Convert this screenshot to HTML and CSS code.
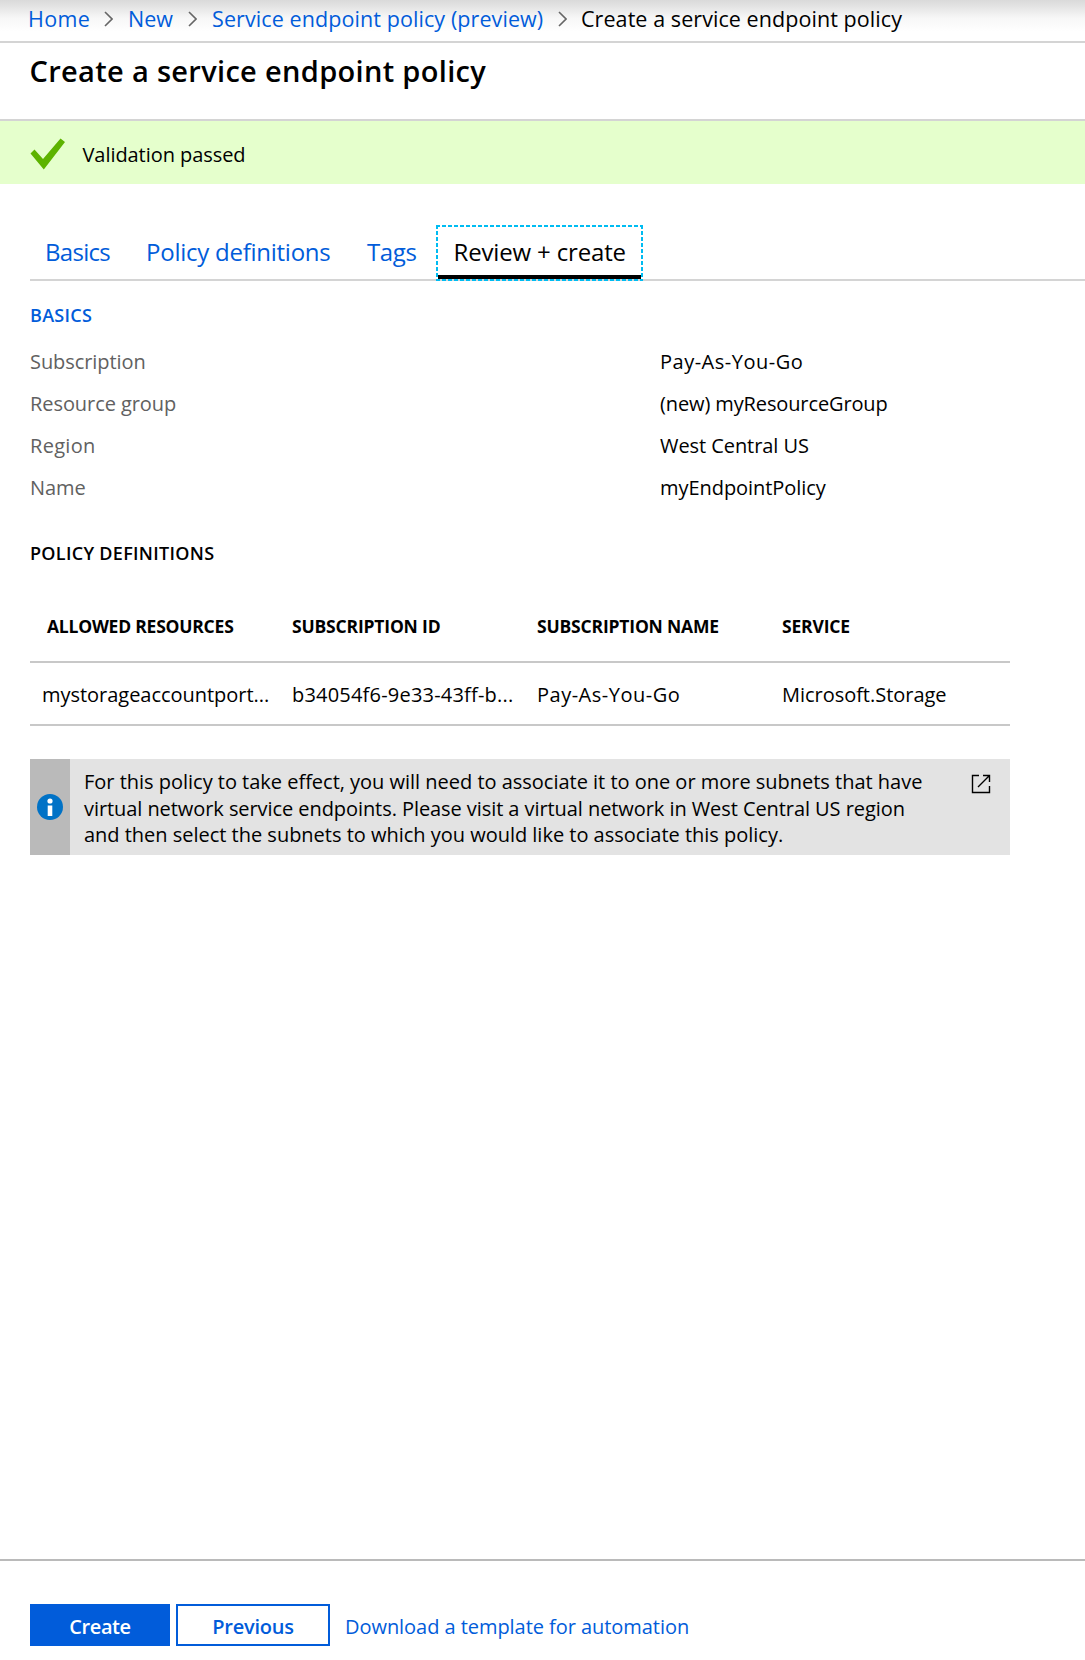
FILE: index.html
```html
<!DOCTYPE html>
<html lang="en">
<head>
<meta charset="utf-8">
<title>Create a service endpoint policy</title>
<link rel="stylesheet" href="styles.css">
</head>
<body>
<div class="page">
  <nav class="breadcrumb">
    <a class="crumb crumb-home" href="#">Home</a>
    <svg class="chevron" viewBox="0 0 9 16"><path d="M1 1l7 7-7 7"/></svg>
    <a class="crumb crumb-new" href="#">New</a>
    <svg class="chevron" viewBox="0 0 9 16"><path d="M1 1l7 7-7 7"/></svg>
    <a class="crumb crumb-service" href="#">Service endpoint policy (preview)</a>
    <svg class="chevron" viewBox="0 0 9 16"><path d="M1 1l7 7-7 7"/></svg>
    <span class="crumb crumb-current">Create a service endpoint policy</span>
  </nav>

  <h1 class="title">Create a service endpoint policy</h1>

  <div class="validation">
    <svg class="check" viewBox="0 0 36 32"><path d="M0.5 15.5L4.5 11.5L13 21L30.500 0.5L35 4L13.800 31.500Z"/></svg>
    <span>Validation passed</span>
  </div>

  <main class="content">
    <div class="tabs">
      <a class="tab tab-basics" href="#">Basics</a>
      <a class="tab tab-policy" href="#">Policy definitions</a>
      <a class="tab tab-tags" href="#">Tags</a>
      <a class="tab tab-active" href="#">Review + create
        <svg class="focus" viewBox="0 0 207 56"><path d="M0 1H207M0 55H207M1 0V56M206 0V56"/></svg>
      </a>
    </div>

    <h2 class="section section-link">BASICS</h2>
    <dl class="summary">
      <dt>Subscription</dt><dd class="hyphenated">Pay-As-You-Go</dd>
      <dt>Resource group</dt><dd class="group">(new) myResourceGroup</dd>
      <dt class="region">Region</dt><dd>West Central US</dd>
      <dt>Name</dt><dd class="policy">myEndpointPolicy</dd>
    </dl>

    <h2 class="section section-policy">POLICY DEFINITIONS</h2>
    <div class="table">
      <div class="row head">
        <span class="first">ALLOWED RESOURCES</span><span>SUBSCRIPTION ID</span><span>SUBSCRIPTION NAME</span><span>SERVICE</span>
      </div>
      <div class="row">
        <span>mystorageaccountport...</span><span class="guid">b34054f6-9e33-43ff-b...</span><span class="hyphenated">Pay-As-You-Go</span><span>Microsoft.Storage</span>
      </div>
    </div>

    <div class="info">
      <div class="info-side">
        <svg class="info-icon" viewBox="0 0 26 26"><circle class="disc" cx="13" cy="13" r="13"/><circle cx="13" cy="7" r="2.600"/><path d="M10.700 11.500h4.600v10.500h-4.600z"/></svg>
      </div>
      <p class="info-text">For this policy to take effect, you will need to associate it to one or more subnets that have<br><span class="tight">virtual network service endpoints. Please visit a virtual network in West Central US region</span><br>and then select the subnets to which you would like to associate this policy.</p>
      <svg class="external" viewBox="0 0 20 20"><path d="M8 1.500H1.500V18.500H18.500V12M12 1.500H18.500V8M18.500 1.500L7 13"/></svg>
    </div>
  </main>

  <footer class="footer">
    <button class="btn btn-primary">Create</button>
    <button class="btn btn-secondary">Previous</button>
    <a class="download" href="#">Download a template for automation</a>
  </footer>
</div>
</body>
</html>
```
FILE: styles.css
```css
* { box-sizing: border-box; }
body {
  margin: 0;
  background: #fff;
  color: #000;
  font: 20px/26.5px "Open Sans", "Noto Sans", sans-serif;
}
a { color: #015cda; text-decoration: none; }
h1, h2, p, dl, dd { margin: 0; }
svg { display: block; flex: none; }

.page { display: flex; flex-direction: column; height: 1660px; overflow: hidden; }

.breadcrumb {
  display: flex;
  height: 43px;
  flex: none;
  padding-left: 28px;
  border-bottom: 2px solid #d4d4d4;
  background: linear-gradient(#dadada 0, #e3e3e3 6px, #f7f7f7 18px, #fff 32px);
  font-size: 21.5px;
  line-height: 37px;
  white-space: nowrap;
}
.crumb { flex: none; }
.crumb-home { width: 76px; letter-spacing: .35px; }
.crumb-new { width: 60px; margin-left: 15px; letter-spacing: 0; }
.crumb-service { width: 346px; margin-left: 15px; letter-spacing: .09px; }
.crumb-current { margin-left: 14px; letter-spacing: .07px; }
.chevron { width: 9px; height: 16px; margin-top: 11px; fill: none; stroke: #666; stroke-width: 1.6; }

.title {
  height: 78px;
  flex: none;
  padding: 1px 0 0 29.5px;
  border-bottom: 2px solid #d4d4d4;
  font-size: 29px;
  font-weight: 600;
  line-height: 54px;
  letter-spacing: .32px;
}

.validation {
  display: flex;
  flex: none;
  align-items: center;
  gap: 17px;
  height: 63px;
  padding: 5px 0 0 29.5px;
  background: #e5ffcc;
  letter-spacing: -.06px;
}
.check { width: 36px; height: 32px; margin-top: -3px; fill: #5db300; }

.content { flex: 1; padding: 41px 0 0 30px; }

.tabs {
  display: flex;
  height: 56px;
  padding-left: 15px;
  border-bottom: 2px solid #d4d4d4;
  font-size: 24px;
  line-height: 53px;
  white-space: nowrap;
}
.tab { flex: none; }
.tab-basics { width: 101px; letter-spacing: -.7px; }
.tab-policy { width: 221px; letter-spacing: -.25px; }
.tab-tags { width: 69px; letter-spacing: -.4px; }
.tab-active {
  position: relative;
  width: 207px;
  height: 56px;
  padding-left: 17.5px;
  color: #000;
  letter-spacing: -.16px;
}
.tab-active::after {
  content: "";
  position: absolute;
  left: 2px;
  right: 2px;
  bottom: 2px;
  height: 4px;
  background: #000;
}
.focus {
  position: absolute;
  inset: 0;
  width: 207px;
  height: 56px;
  fill: none;
  stroke: #00bcf2;
  stroke-width: 2;
  stroke-dasharray: 4 2;
}

.section { font-size: 18px; font-weight: 600; line-height: 30px; letter-spacing: .3px; }
.section-link { margin-top: 19px; color: #015cda; }
.section-policy { margin-top: 29px; }

.summary {
  display: grid;
  grid-template-columns: 630px 1fr;
  margin-top: 11px;
  line-height: 42px;
  letter-spacing: -.07px;
}
.summary dt { color: #616161; }
.summary .region { letter-spacing: .3px; }
.summary .group { letter-spacing: -.12px; }
.summary .policy { letter-spacing: -.05px; }
.hyphenated { letter-spacing: .5px; }

.table { width: 980px; margin-top: 23px; }
.row {
  display: grid;
  grid-template-columns: 262px 245px 245px 1fr;
  height: 63px;
  padding: 1px 0 0 0;
  border-bottom: 2px solid #c8c8c8;
  line-height: 61px;
  letter-spacing: -.03px;
}
.row span:first-child { padding-left: 12px; }
.row .guid { letter-spacing: .2px; }
.row .hyphenated { letter-spacing: .5px; }
.head {
  height: 72px;
  padding: 0;
  font-size: 17.5px;
  font-weight: 700;
  line-height: 70px;
  letter-spacing: -.18px;
}
.row .first:first-child { padding-left: 17px; letter-spacing: -.22px; }

.info {
  display: flex;
  width: 980px;
  height: 96px;
  margin-top: 33px;
  background: #e3e3e3;
}
.info-side { display: flex; align-items: center; justify-content: center; width: 40px; background: #bababa; }
.info-icon { width: 26px; height: 26px; fill: #fff; }
.info-icon .disc { fill: #0072c6; }
.info-text { width: 900.5px; padding: 10px 0 0 14px; letter-spacing: -.015px; white-space: nowrap; }
.info-text .tight { letter-spacing: -.07px; }
.external { width: 20px; height: 20px; margin-top: 15px; fill: none; stroke: #000; stroke-width: 1.4; }

.footer {
  display: flex;
  flex: none;
  height: 101px;
  padding: 43px 0 0 30px;
  border-top: 2px solid #bababa;
  line-height: 46px;
}
.btn {
  height: 42px;
  padding: 3px 0 0;
  border: 2px solid #015cda;
  font: 600 20px/35px "Open Sans", "Noto Sans", sans-serif;
}
.btn-primary { width: 140px; background: #015cda; color: #fff; letter-spacing: -.4px; }
.btn-secondary { width: 154px; margin-left: 6px; background: #fff; color: #015cda; letter-spacing: -.23px; }
.download { margin-left: 15px; letter-spacing: -.05px; }
```
